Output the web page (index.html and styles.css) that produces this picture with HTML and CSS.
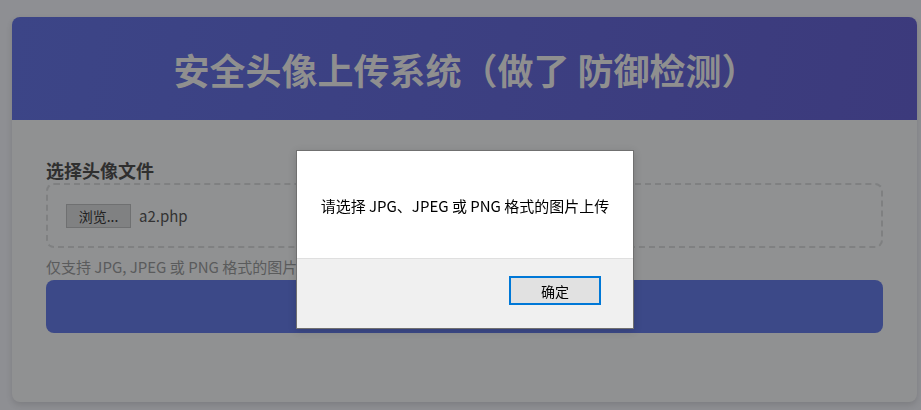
FILE: index.html
```html
<!DOCTYPE html>
<html lang="zh-CN">
<head>
  <meta charset="UTF-8" />
  <meta name="viewport" content="width=device-width, initial-scale=1.0"/>
  <title>安全头像上传系统</title>
  <link rel="stylesheet" href="styles.css">
</head>
<body>
  <div class="card">
    <div class="header">
      <h1>安全头像上传系统（做了 防御检测）</h1>
    </div>
    <form class="upload-form">
      <label class="field-label">选择头像文件</label>
      <div class="drop-box">
        <span class="file-btn">浏览...</span>
        <span class="file-name">a2.php</span>
      </div>
      <p class="hint">仅支持 JPG, JPEG 或 PNG 格式的图片，大小不超过 2MB</p>
      <button type="button" class="submit">上传头像</button>
    </form>
  </div>

  <!-- alert() dialog on top of the dimmed page -->
  <div class="overlay">
    <div class="dialog">
      <div class="dialog-body">请选择 JPG、JPEG 或 PNG 格式的图片上传</div>
      <div class="dialog-foot">
        <button type="button" class="ok-btn">确定</button>
      </div>
    </div>
  </div>
</body>
</html>
```

FILE: styles.css
```css
* {
  box-sizing: border-box;
  font-family: "Noto Sans CJK SC", "Liberation Sans", sans-serif;
}

body {
  margin: 0;
  padding: 17px 4px 0 12px;
  background: #8e8f93;
  height: 410px;
  overflow: hidden;
}

.card {
  height: 385px;
  background: #909192;
  border-radius: 8px;
  box-shadow: 0 3px 6px rgba(0,0,0,0.12);
  overflow: hidden;
}

.header {
  height: 103px;
  background: linear-gradient(100deg, #3c4587, #3c3a7c);
  display: flex;
  align-items: center;
  justify-content: center;
}

.header h1 {
  margin: 0;
  padding-left: 2px;
  font-size: 36px;
  font-weight: bold;
  color: #8f8f8f;
}

.upload-form {
  padding: 38px 34px 0 34px;
}

.field-label {
  display: block;
  font-size: 18px;
  font-weight: bold;
  color: #2f2f2f;
  line-height: 24px;
  margin-bottom: 1px;
}

.drop-box {
  height: 65px;
  border: 2px dashed #7f8081;
  border-radius: 8px;
  display: flex;
  align-items: center;
  padding-left: 18px;
  gap: 8px;
}

.file-btn {
  width: 65px;
  height: 24px;
  border: 1px solid #6f7071;
  background: #808182;
  color: #222;
  font-size: 14px;
  display: flex;
  align-items: center;
  justify-content: center;
}

.file-name {
  font-size: 15px;
  color: #333;
}

.hint {
  margin: 9px 0 0;
  font-size: 15px;
  line-height: 20px;
  color: #5a5b5c;
}

.submit {
  display: block;
  width: 100%;
  height: 53px;
  margin-top: 3px;
  border: none;
  border-radius: 8px;
  background: #3c4988;
  color: #8f8f8f;
  font-size: 18px;
}

.overlay {
  position: fixed;
  inset: 0;
  padding: 150px 0 0 296px;
}

.dialog {
  width: 338px;
  height: 179px;
  border: 1px solid #707070;
  background: #f0f0f0;
  box-shadow: 0 2px 8px rgba(0,0,0,0.15);
  display: flex;
  flex-direction: column;
}

.dialog-body {
  height: 108px;
  background: #fff;
  border-bottom: 1px solid #dfdfdf;
  display: flex;
  align-items: center;
  justify-content: center;
  font-size: 15px;
  color: #000;
  padding-top: 2px;
}

.dialog-foot {
  flex: 1;
  display: flex;
  justify-content: flex-end;
  align-items: flex-start;
  padding: 17px 32px 0 0;
}

.ok-btn {
  width: 92px;
  height: 29px;
  border: 2px solid #0078d7;
  background: #e1e1e1;
  color: #000;
  font-size: 14px;
  padding: 0;
}
```
